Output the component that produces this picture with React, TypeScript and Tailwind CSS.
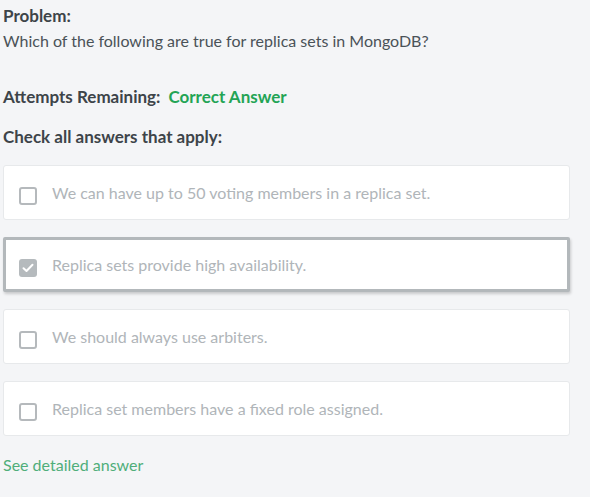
import { useState } from 'react';

const answers = [
  'We can have up to 50 voting members in a replica set.',
  'Replica sets provide high availability.',
  'We should always use arbiters.',
  'Replica set members have a fixed role assigned.',
];

function CheckBox({ checked }: { checked: boolean }) {
  if (checked) {
    return (
      <span className="mt-[6px] flex h-[18px] w-[18px] shrink-0 items-center justify-center rounded-[3px] bg-[#b5babd]">
        <svg width="12" height="10" viewBox="0 0 12 10" fill="none">
          <path d="M1.5 5.2 4.5 8 10.5 1.8" stroke="#fff" strokeWidth="2" strokeLinecap="round" strokeLinejoin="round" />
        </svg>
      </span>
    );
  }
  return <span className="mt-[6px] h-[18px] w-[18px] shrink-0 rounded-[3px] border-2 border-[#b5b9bc] bg-white" />;
}

export default function App() {
  const [selected, setSelected] = useState<number[]>([1]);

  const toggle = (i: number) =>
    setSelected((s) => (s.includes(i) ? s.filter((x) => x !== i) : [...s, i]));

  return (
    <div className="min-h-[497px] w-[590px] bg-[#f4f5f7] px-[3px] pt-[6px] font-['Lato',sans-serif]">
      <div className="text-[17px] font-bold leading-[20px] text-[#3d4449]">Problem:</div>
      <div className="mt-[5px] text-[16px] leading-[20px] text-[#4a5258]">
        Which of the following are true for replica sets in MongoDB?
      </div>

      <div className="mt-[36px] flex gap-[8px] text-[17px] font-bold leading-[20px]">
        <span className="text-[#3d4449]">Attempts Remaining:</span>
        <span className="text-[#23a455]">Correct Answer</span>
      </div>

      <div className="mt-[20px] text-[17px] font-bold leading-[20px] text-[#3d4449]">
        Check all answers that apply:
      </div>

      <div className="mt-[18px] flex w-[567px] flex-col gap-[17px]">
        {answers.map((a, i) => {
          const on = selected.includes(i);
          return (
            <div
              key={i}
              onClick={() => toggle(i)}
              className={
                on
                  ? 'flex h-[55px] cursor-pointer items-center gap-[15px] rounded-[2px] border-[3px] border-[#b3b8bb] bg-white pl-[13px] shadow-[1px_2px_3px_rgba(0,0,0,0.18)]'
                  : 'flex h-[55px] cursor-pointer items-center gap-[15px] rounded-[3px] border border-[#e7e9eb] bg-white pl-[15px]'
              }
            >
              <CheckBox checked={on} />
              <span className="text-[16px] leading-[20px] text-[#b0b5b9]">{a}</span>
            </div>
          );
        })}
      </div>

      <div className="mt-[19px] text-[16px] leading-[20px] text-[#4fae7a]">See detailed answer</div>
    </div>
  );
}
